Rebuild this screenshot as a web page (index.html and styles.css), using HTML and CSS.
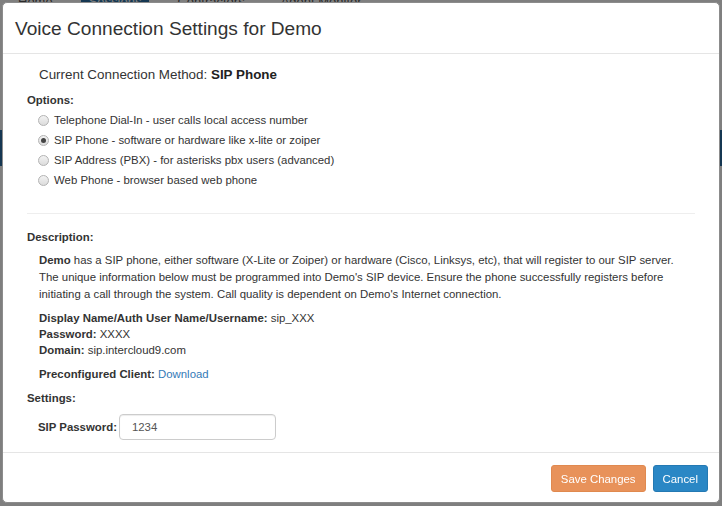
FILE: index.html
```html
<!DOCTYPE html>
<html>
<head>
<meta charset="utf-8">
<link rel="stylesheet" href="styles.css">
</head>
<body>
<div class="page">
  <div class="topnav">
    <span class="tab">Home</span><span class="tab active">Sessions</span><span class="tab">Contractors</span><span class="tab">Agent Monitor</span>
  </div>
  <div class="band"></div>
</div>
<div class="overlay"></div>
<div class="modal">
  <div class="modal-header">
    <h4 class="modal-title">Voice Connection Settings for Demo</h4>
  </div>
  <div class="modal-body">
    <div class="current">Current Connection Method: <b>SIP Phone</b></div>
    <div class="label">Options:</div>
    <div class="options">
      <label class="opt"><input type="radio" name="m"> Telephone Dial-In - user calls local access number</label>
      <label class="opt"><input type="radio" name="m" checked> SIP Phone - software or hardware like x-lite or zoiper</label>
      <label class="opt"><input type="radio" name="m"> SIP Address (PBX) - for asterisks pbx users (advanced)</label>
      <label class="opt"><input type="radio" name="m"> Web Phone - browser based web phone</label>
    </div>
    <hr class="sep">
    <div class="label">Description:</div>
    <div class="indent">
      <p class="desc"><b>Demo</b> has a SIP phone, either software (X-Lite or Zoiper) or hardware (Cisco, Linksys, etc), that will register to our SIP server. The unique information below must be programmed into Demo's SIP device. Ensure the phone successfully registers before initiating a call through the system. Call quality is dependent on Demo's Internet connection.</p>
      <div class="creds">
        <div><b>Display Name/Auth User Name/Username:</b> sip_XXX</div>
        <div><b>Password:</b> XXXX</div>
        <div><b>Domain:</b> sip.intercloud9.com</div>
      </div>
      <div class="client"><b>Preconfigured Client:</b> <a href="#">Download</a></div>
    </div>
    <div class="label">Settings:</div>
    <div class="field">
      <span class="field-label">SIP Password:</span>
      <input class="input" type="text" value="1234">
    </div>
  </div>
  <div class="modal-footer">
    <button class="btn btn-save">Save Changes</button>
    <button class="btn btn-cancel">Cancel</button>
  </div>
</div>
</body>
</html>
```
FILE: styles.css
```css
html, body {
  margin: 0;
  padding: 0;
  height: 100%;
}
body {
  font-family: "Liberation Sans", Arial, sans-serif;
  color: #333;
  background: #fff;
  overflow: hidden;
}
.page {
  height: 100%;
}
.topnav {
  display: flex;
  gap: 20px;
  padding: 0 0 0 10px;
  height: 130px;
  font-size: 13px;
  line-height: 4px;
  color: #555;
}
.tab {
  padding: 0 8px;
}
.tab.active {
  background: #2a6fa5;
  color: #fff;
}
.band {
  height: 36px;
  background: #2a6fa5;
}
.overlay {
  position: fixed;
  inset: 0;
  background: rgba(0, 0, 0, 0.5);
}
.modal {
  position: fixed;
  top: 2px;
  left: 2px;
  width: 716px;
  height: 499px;
  background: #fff;
  border: 1px solid #8c8c8c;
  border-radius: 5px;
  display: flex;
  flex-direction: column;
}
.modal-header {
  padding: 13px 12px 12px;
  border-bottom: 1px solid #e5e5e5;
}
.modal-title {
  margin: 0;
  font-size: 19.1px;
  font-weight: normal;
  line-height: 25px;
  color: #333;
}
.modal-body {
  flex: 1;
  padding: 12px 24px 0;
  font-size: 11.4px;
}
.current {
  font-size: 13.4px;
  padding-left: 12px;
  line-height: 18px;
}
.current b {
  color: #222;
}
.label {
  font-weight: bold;
  font-size: 11.4px;
  line-height: 17px;
  margin-top: 8px;
}
.options {
  display: flex;
  flex-direction: column;
  padding: 1px 0 0 11px;
}
.opt {
  display: flex;
  align-items: center;
  gap: 5px;
  height: 20px;
  font-size: 11.4px;
}
.opt input {
  appearance: none;
  -webkit-appearance: none;
  margin: 0;
  width: 11px;
  height: 11px;
  border: 1px solid #b3b3b3;
  border-radius: 50%;
  background: linear-gradient(#f2f2f2, #dcdcdc);
  position: relative;
}
.opt input:checked::after {
  content: "";
  position: absolute;
  left: 2px;
  top: 2px;
  width: 5px;
  height: 5px;
  border-radius: 50%;
  background: #444;
}
.sep {
  border: 0;
  border-top: 1px solid #eee;
  margin: 23px 0 15px;
}
.indent {
  padding-left: 12px;
}
.desc {
  margin: 6px 0 7px;
  line-height: 17px;
}
.creds {
  line-height: 16px;
}
.client {
  margin-top: 8px;
  line-height: 16px;
}
.client a {
  color: #337ab7;
  text-decoration: none;
}
.field {
  display: flex;
  align-items: center;
  gap: 2px;
  padding: 7px 0 0 11px;
}
.field-label {
  font-weight: bold;
}
.input {
  box-sizing: border-box;
  width: 157px;
  height: 26px;
  padding: 0 12px;
  border: 1px solid #ccc;
  border-radius: 4px;
  font-family: inherit;
  font-size: 11.4px;
  color: #555;
  box-shadow: inset 0 1px 1px rgba(0,0,0,.075);
}
.modal-footer {
  border-top: 1px solid #e5e5e5;
  padding: 12px 11px 10px;
  display: flex;
  justify-content: flex-end;
  gap: 7px;
}
.btn {
  font-family: inherit;
  font-size: 11.4px;
  color: #fff;
  border-radius: 3px;
  height: 27px;
  padding: 0 9px;
  cursor: pointer;
}
.btn-save {
  background: #e8925a;
  border: 1px solid #e0894f;
}
.btn-cancel {
  background: #2a87c5;
  border: 1px solid #2479b3;
}
```
